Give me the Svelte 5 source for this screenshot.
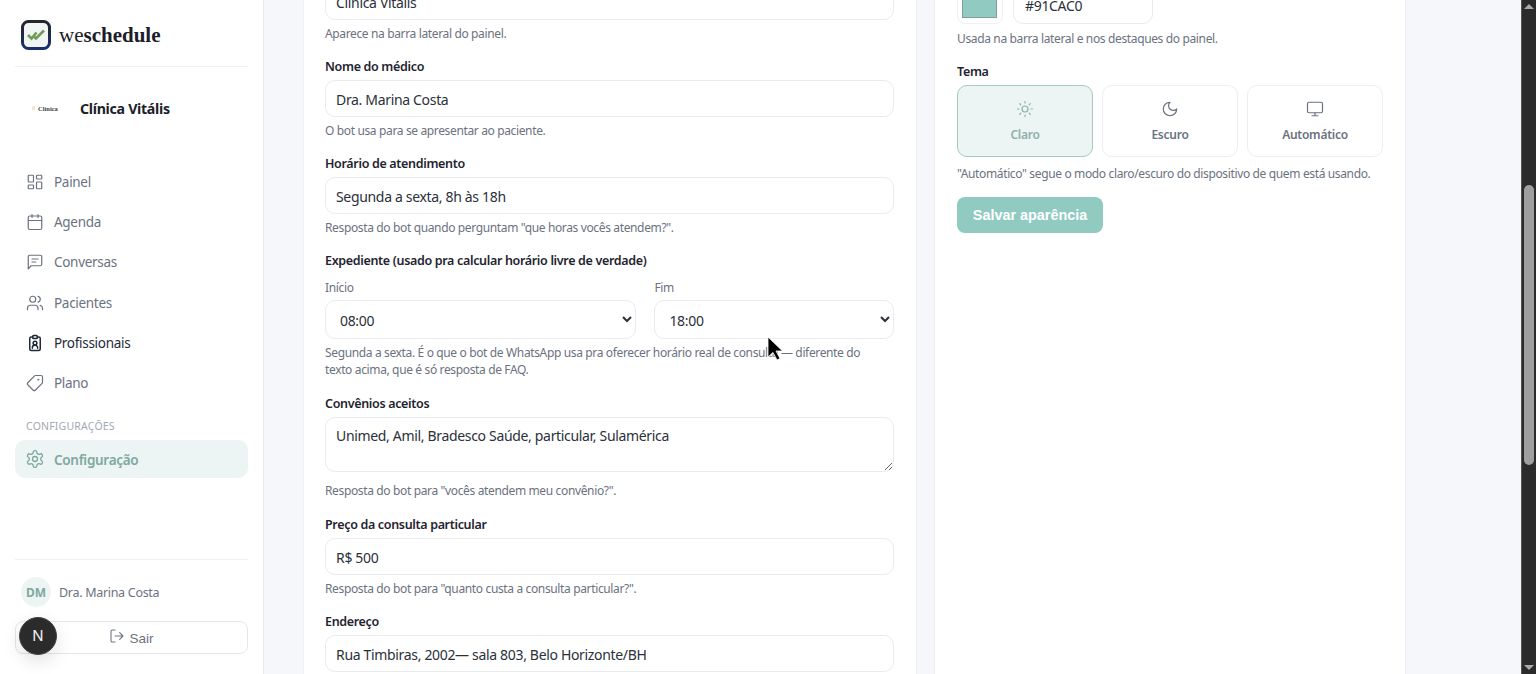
<script>
  const fields = [
    { label: 'Nome do médico', value: 'Dra. Marina Costa', hint: 'O bot usa para se apresentar ao paciente.' },
    { label: 'Horário de atendimento', value: 'Segunda a sexta, 8h às 18h', hint: 'Resposta do bot quando perguntam "que horas vocês atendem?".' }
  ];
</script>

<div class="shell">
  <aside class="sidebar">
    <div class="brand">
      <svg class="logo" viewBox="0 0 30 30" width="30" height="30">
        <defs>
          <linearGradient id="lg" x1="0" y1="0" x2="0" y2="1">
            <stop offset="0" stop-color="#22252c" /><stop offset="1" stop-color="#1c2f6b" />
          </linearGradient>
        </defs>
        <rect x="1.500" y="1.500" width="27" height="27" rx="6" fill="#f0f4f3" stroke="url(#lg)" stroke-width="3" />
        <path d="M7 15l3.500 3.500L15.500 12.500M12.500 16l2.500 2.500L23 10.500" fill="none" stroke="#6f9a58" stroke-width="2.600" />
      </svg>
      <span class="wordmark">we<b>schedule</b></span>
    </div>

    <div class="clinic">
      <span class="clinic-logo"><i></i>Clínica</span>
      <strong>Clínica Vitális</strong>
    </div>

    <nav class="nav">
      <a href="#a">
        <svg viewBox="0 0 24 24"><rect x="3" y="3" width="7" height="9" rx="1" /><rect x="14" y="3" width="7" height="5" rx="1" /><rect x="14" y="12" width="7" height="9" rx="1" /><rect x="3" y="16" width="7" height="5" rx="1" /></svg>
        <span>Painel</span>
      </a>
      <a href="#a">
        <svg viewBox="0 0 24 24"><path d="M8 2v4M16 2v4M3 10h18" /><rect x="3" y="4" width="18" height="18" rx="2" /></svg>
        <span>Agenda</span>
      </a>
      <a href="#a">
        <svg viewBox="0 0 24 24"><path d="M21 15a2 2 0 0 1-2 2H7l-4 4V5a2 2 0 0 1 2-2h14a2 2 0 0 1 2 2z" /><path d="M16 8H8M13 12H8" /></svg>
        <span>Conversas</span>
      </a>
      <a href="#a">
        <svg viewBox="0 0 24 24"><path d="M16 21v-2a4 4 0 0 0-4-4H6a4 4 0 0 0-4 4v2" /><circle cx="9" cy="7" r="4" /><path d="M22 21v-2a4 4 0 0 0-3-3.870M16 3.130a4 4 0 0 1 0 7.750" /></svg>
        <span>Pacientes</span>
      </a>
      <a href="#a" class="hover">
        <svg viewBox="0 0 24 24"><path d="M9 4H7a2 2 0 0 0-2 2v14a2 2 0 0 0 2 2h10a2 2 0 0 0 2-2V6a2 2 0 0 0-2-2h-2" /><rect x="9" y="2" width="6" height="4" rx="1" /><circle cx="12" cy="12" r="2.500" /><path d="M8.500 19v-1a3 3 0 0 1 3-3h1a3 3 0 0 1 3 3v1" /></svg>
        <span>Profissionais</span>
      </a>
      <a href="#a">
        <svg viewBox="0 0 24 24" class="flip"><path d="M12.586 2.586A2 2 0 0 0 11.172 2H4a2 2 0 0 0-2 2v7.172a2 2 0 0 0 .586 1.414l8.704 8.704a2.426 2.426 0 0 0 3.420 0l6.580-6.580a2.426 2.426 0 0 0 0-3.420z" /><circle cx="7.500" cy="7.500" r=".5" /></svg>
        <span>Plano</span>
      </a>
    </nav>

    <div class="section">Configurações</div>
    <a href="#a" class="active">
      <svg viewBox="0 0 24 24"><path d="M12.220 2h-.44a2 2 0 0 0-2 2v.18a2 2 0 0 1-1 1.730l-.43.25a2 2 0 0 1-2 0l-.15-.08a2 2 0 0 0-2.730.73l-.22.38a2 2 0 0 0 .73 2.730l.15.1a2 2 0 0 1 1 1.720v.51a2 2 0 0 1-1 1.740l-.15.09a2 2 0 0 0-.73 2.730l.22.38a2 2 0 0 0 2.730.73l.15-.08a2 2 0 0 1 2 0l.43.25a2 2 0 0 1 1 1.730V20a2 2 0 0 0 2 2h.44a2 2 0 0 0 2-2v-.18a2 2 0 0 1 1-1.730l.43-.25a2 2 0 0 1 2 0l.15.08a2 2 0 0 0 2.730-.73l.22-.39a2 2 0 0 0-.73-2.730l-.15-.08a2 2 0 0 1-1-1.740v-.5a2 2 0 0 1 1-1.740l.15-.09a2 2 0 0 0 .73-2.730l-.22-.38a2 2 0 0 0-2.730-.73l-.15.08a2 2 0 0 1-2 0l-.43-.25a2 2 0 0 1-1-1.730V4a2 2 0 0 0-2-2z" /><circle cx="12" cy="12" r="3" /></svg>
      <span>Configuração</span>
    </a>

    <div class="foot">
      <div class="user"><span class="avatar">DM</span><span>Dra. Marina Costa</span></div>
      <button class="logout">
        <svg viewBox="0 0 24 24"><path d="M16 17l5-5-5-5M21 12H9M9 21H5a2 2 0 0 1-2-2V5a2 2 0 0 1 2-2h4" /></svg>
        <span>Sair</span>
      </button>
    </div>
    <div class="next">N</div>
  </aside>

  <main class="main">
    <section class="card left">
      <div class="field">
        <label for="f0">Nome da clínica</label>
        <input id="f0" class="input" value="Clínica Vitális" />
        <p class="hint">Aparece na barra lateral do painel.</p>
      </div>
      {#each fields as f, i}
        <div class="field">
          <label for={`ff${i}`}>{f.label}</label>
          <input id={`ff${i}`} class="input" value={f.value} />
          <p class="hint">{f.hint}</p>
        </div>
      {/each}
      <div class="field gap17">
        <div class="lbl">Expediente (usado pra calcular horário livre de verdade)</div>
        <div class="times">
          <div>
            <label class="sub" for="s1">Início</label>
            <select id="s1"><option>08:00</option></select>
          </div>
          <div>
            <label class="sub" for="s2">Fim</label>
            <select id="s2"><option>18:00</option></select>
          </div>
        </div>
        <p class="hint narrow">Segunda a sexta. É o que o bot de WhatsApp usa pra oferecer horário real de consulta — diferente do texto acima, que é só resposta de FAQ.</p>
      </div>
      <div class="field gap17">
        <label for="t1">Convênios aceitos</label>
        <textarea id="t1" class="input area">Unimed, Amil, Bradesco Saúde, particular, Sulamérica</textarea>
        <p class="hint wide">Resposta do bot para "vocês atendem meu convênio?".</p>
      </div>
      <div class="field">
        <label for="f3">Preço da consulta particular</label>
        <input id="f3" class="input" value="R$ 500" />
        <p class="hint">Resposta do bot para "quanto custa a consulta particular?".</p>
      </div>
      <div class="field">
        <label for="f4">Endereço</label>
        <input id="f4" class="input" value="Rua Timbiras, 2002— sala 803, Belo Horizonte/BH" />
      </div>
    </section>

    <section class="card right">
      <label for="c1">Cor principal</label>
      <div class="color">
        <span class="swatch-box"><span class="swatch"></span></span>
        <input id="c1" class="input hex" value="#91CAC0" />
      </div>
      <p class="hint hint-color">Usada na barra lateral e nos destaques do painel.</p>

      <div class="lbl tema">Tema</div>
      <div class="themes">
        <button class="theme on">
          <svg viewBox="0 0 24 24"><circle cx="12" cy="12" r="4" /><path d="M12 2v2M12 20v2M4.930 4.930l1.410 1.410M17.660 17.660l1.410 1.410M2 12h2M20 12h2M6.340 17.660l-1.410 1.410M19.070 4.930l-1.410 1.410" /></svg>
          Claro
        </button>
        <button class="theme">
          <svg viewBox="0 0 24 24"><path d="M12 3a6 6 0 0 0 9 9 9 9 0 1 1-9-9Z" /></svg>
          Escuro
        </button>
        <button class="theme">
          <svg viewBox="0 0 24 24"><rect x="2" y="3" width="20" height="14" rx="2" /><path d="M8 21h8M12 17v4" /></svg>
          Automático
        </button>
      </div>
      <p class="hint hint-theme">"Automático" segue o modo claro/escuro do dispositivo de quem está usando.</p>
      <button class="save">Salvar aparência</button>
    </section>
  </main>

  <div class="scrollbar">
    <span class="arrow up"></span>
    <span class="thumb"></span>
    <span class="arrow down"></span>
  </div>

  <svg class="cursor" viewBox="0 0 16 25" width="16" height="25">
    <path d="M1 1v20l5-4.500 4 7.500 3-1.500-4-7.500h6.500z" fill="#000" stroke="#fff" stroke-width=".8" />
  </svg>
</div>

<style>
  :global(body) { margin: 0; background: #f5f7fb; }
  .shell {
    position: relative;
    display: flex;
    height: 674px;
    overflow: hidden;
    font-family: "Noto Sans", "Open Sans", sans-serif;
    letter-spacing: -.3px;
    color: #1f2430;
  }
  .sidebar {
    position: relative;
    box-sizing: border-box;
    width: 264px;
    flex: none;
    display: flex;
    flex-direction: column;
    background: #fff;
    border-right: 1px solid #e9ebef;
    padding: 0 15px 20px;
  }
  .brand {
    display: flex;
    align-items: center;
    gap: 8px;
    height: 67px;
    padding: 4px 0 0 6px;
    box-sizing: border-box;
    border-bottom: 1px solid #eef0f3;
  }
  .logo { flex: none; }
  .wordmark { font: 400 21px "Liberation Serif", serif; letter-spacing: 0; color: #1b2029; }
  .wordmark b { font-weight: 700; }
  .clinic {
    display: flex;
    align-items: center;
    height: 30px;
    margin-top: 26px;
    padding-left: 15px;
  }
  .clinic-logo {
    width: 50px;
    display: flex;
    align-items: center;
    font: 700 6.500px "Liberation Serif", serif;
    letter-spacing: 0;
    color: #444;
  }
  .clinic-logo i { width: 3px; height: 4px; margin: 0 3px 0 2px; background: #efe9c8; }
  .clinic strong { font-size: 14.200px; font-weight: 700; color: #1c2028; }
  .nav { display: flex; flex-direction: column; margin-top: 39px; }
  .nav a, .active {
    display: flex;
    align-items: center;
    gap: 10px;
    height: 40.200px;
    padding-left: 11px;
    text-decoration: none;
    font-size: 13.500px;
    color: #6b7280;
  }
  .active span { margin-top: 1px; }
  svg:not(.logo):not(.cursor) {
    width: 18px;
    height: 18px;
    flex: none;
    fill: none;
    stroke: currentColor;
    stroke-width: 1.600;
    stroke-linecap: round;
    stroke-linejoin: round;
  }
  .nav a.hover { color: #1f2937; }
  .nav a.hover svg { stroke-width: 2; }
  .flip { transform: scaleX(-1); }
  .section {
    margin: 15px 0 0 11px;
    height: 17px;
    font-size: 10.500px;
    line-height: 17px;
    letter-spacing: .2px;
    text-transform: uppercase;
    color: #a3a9b3;
  }
  .active {
    height: 38px;
    margin-top: 5px;
    border-radius: 10px;
    background: #ecf5f3;
    color: #7fa89f;
    font-weight: 600;
  }
  .active svg { width: 20px !important; height: 20px !important; margin-left: -1px; margin-right: -1px; }
  .foot { margin-top: auto; border-top: 1px solid #eef0f3; }
  .user {
    display: flex;
    align-items: center;
    gap: 8px;
    margin-top: 17px;
    padding-left: 6px;
    font-size: 12.500px;
    color: #6b7280;
  }
  .avatar {
    width: 30px;
    height: 30px;
    border-radius: 50%;
    background: #ecf5f3;
    color: #7fa89f;
    font-size: 12px;
    font-weight: 700;
    letter-spacing: 0;
    display: flex;
    align-items: center;
    justify-content: center;
  }
  .logout {
    width: 100%;
    height: 33px;
    margin-top: 14px;
    display: flex;
    align-items: center;
    justify-content: center;
    gap: 4px;
    background: #fff;
    border: 1px solid #e5e7eb;
    border-radius: 8px;
    font: 400 13.500px "Liberation Sans", sans-serif;
    letter-spacing: 0;
    color: #6b7280;
    padding: 0;
  }
  .logout svg { width: 16px !important; height: 16px !important; margin-top: -3px; }
  .logout span { margin-top: 2px; }
  .next {
    position: absolute;
    left: 19px;
    top: 617px;
    width: 38px;
    height: 38px;
    box-sizing: border-box;
    border-radius: 50%;
    background: #2b2b2b;
    border: 1px solid #444;
    color: #eee;
    font: 400 15px/36px "Inter", sans-serif;
    letter-spacing: 0;
    text-align: center;
    box-shadow: 0 6px 18px rgba(0, 0, 0, .12);
  }

  .main {
    flex: 1;
    min-width: 0;
    display: flex;
    align-items: flex-start;
    gap: 17px;
    padding-left: 39px;
    background: #f5f7fb;
  }
  .card {
    flex: none;
    box-sizing: border-box;
    background: #fff;
    border: 1px solid #eef0f4;
    min-height: 800px;
  }
  .left { width: 614px; margin-top: -61px; padding: 21px 22px 40px 21px; }
  .right { width: 472px; margin-top: -60px; padding: 21px 22px 40px; }
  .field { margin-bottom: 16px; }
  .gap17 { margin-bottom: 17px; }
  label, .lbl {
    display: block;
    font-size: 12.500px;
    font-weight: 600;
    line-height: 17px;
    margin-bottom: 5px;
    letter-spacing: -.33px;
    color: #1f2430;
  }
  .input {
    box-sizing: border-box;
    display: block;
    width: 100%;
    height: 37px;
    padding: 2px 10px 0;
    border: 1px solid #e9ebef;
    border-radius: 10px;
    background: #fff;
    font: 400 14px "Noto Sans", sans-serif;
    letter-spacing: -.33px;
    color: #2b303a;
    outline: none;
  }
  .area { height: 55px; padding-top: 8px; resize: vertical; }
  .hint {
    margin: 5px 0 0;
    font-size: 12px;
    line-height: 17px;
    letter-spacing: -.36px;
    color: #6b7280;
  }
  .narrow { max-width: 545px; }
  .wide { margin-top: 10px; }
  .times {
    display: grid;
    grid-template-columns: minmax(0, 1.3fr) minmax(0, 1fr);
    gap: 18px;
    margin-top: 10px;
  }
  .sub { font-size: 12px; font-weight: 400; color: #6b7280; margin-bottom: 4px; }
  select {
    box-sizing: border-box;
    display: block;
    width: 100%;
    height: 39px;
    padding: 1px 10px 0;
    border: 1px solid #e9ebef;
    border-radius: 10px;
    background: #fff;
    font: 400 14px "Noto Sans", sans-serif;
    letter-spacing: -.33px;
    color: #2b303a;
  }
  .color { display: flex; gap: 10px; }
  .swatch-box {
    box-sizing: border-box;
    width: 46px;
    height: 40px;
    padding: 0 5px 5px 4px;
    border: 1px solid #eef0f3;
    border-radius: 8px;
    display: flex;
  }
  .swatch { flex: 1; background: #91cac0; border: 1px solid #7f9f98; }
  .hex { width: 140px; height: 40px; padding-left: 11px; }
  .hint-color { margin-top: 6px; }
  .tema { margin-top: 16px; }
  .themes { display: grid; grid-template-columns: repeat(3, 1fr); gap: 9px; }
  .theme {
    height: 72px;
    display: flex;
    flex-direction: column;
    align-items: center;
    justify-content: center;
    gap: 8px;
    padding: 0;
    background: #fff;
    border: 1px solid #eceef2;
    border-radius: 10px;
    font: 600 12px "Noto Sans", sans-serif;
    letter-spacing: -.25px;
    color: #6b7280;
  }
  .theme.on { background: #ecf5f3; border-color: #a3c9c1; color: #8fb0a9; }
  .hint-theme { margin-top: 8px; }
  .save {
    display: block;
    width: 146px;
    height: 36px;
    margin-top: 15px;
    padding: 0;
    border: 0;
    border-radius: 8px;
    background: #91cac0;
    color: #fff;
    font: 700 14.400px "Liberation Sans", sans-serif;
    letter-spacing: 0;
  }
  .scrollbar {
    position: absolute;
    top: 0;
    right: 0;
    bottom: 0;
    width: 15px;
    background: #2b2b2b;
    border-left: 1px solid #555;
    box-sizing: border-box;
  }
  .thumb {
    position: absolute;
    left: 2px;
    top: 185px;
    width: 10px;
    height: 280px;
    border-radius: 5px;
    background: #9f9f9f;
  }
  .arrow {
    position: absolute;
    left: 2px;
    width: 0;
    height: 0;
    border-left: 5px solid transparent;
    border-right: 5px solid transparent;
  }
  .up { top: 4px; border-bottom: 5px solid #aaa; }
  .down { bottom: 4px; border-top: 5px solid #aaa; }
  .cursor { position: absolute; left: 767px; top: 336px; }
</style>
